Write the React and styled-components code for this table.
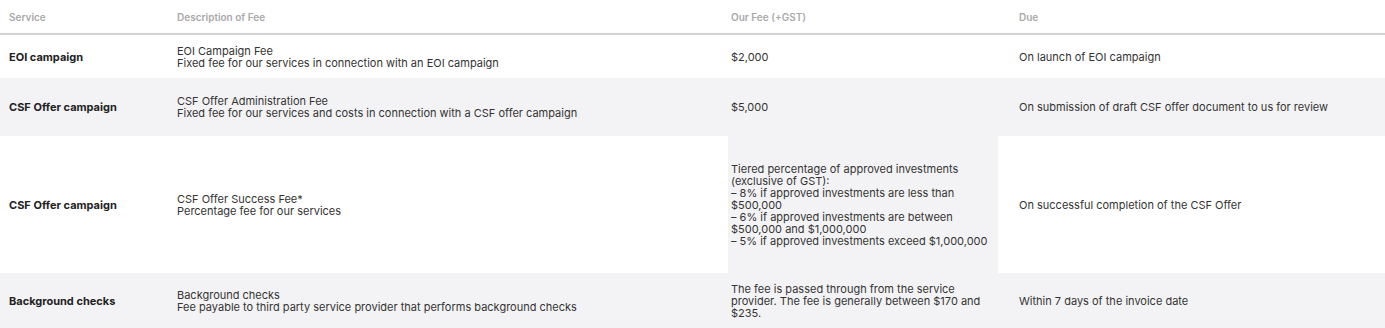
import React from "react";
import styled, { createGlobalStyle } from "styled-components";

const GlobalStyle = createGlobalStyle`
  html, body {
    margin: 0;
    padding: 0;
    background: #fff;
  }
  body {
    font-family: Inter, "Noto Sans", "Liberation Sans", sans-serif;
    color: #333;
  }
`;

const fees = [
  {
    service: "EOI campaign",
    description: ["EOI Campaign Fee", "Fixed fee for our services in connection with an EOI campaign"],
    fee: ["$2,000"],
    due: "On launch of EOI campaign",
    height: 43,
    shaded: false,
  },
  {
    service: "CSF Offer campaign",
    description: [
      "CSF Offer Administration Fee",
      "Fixed fee for our services and costs in connection with a CSF offer campaign",
    ],
    fee: ["$5,000"],
    due: "On submission of draft CSF offer document to us for review",
    height: 58,
    shaded: true,
  },
  {
    service: "CSF Offer campaign",
    description: ["CSF Offer Success Fee*", "Percentage fee for our services"],
    fee: [
      "Tiered percentage of approved investments (exclusive of GST):",
      "– 8% if approved investments are less than $500,000",
      "– 6% if approved investments are between $500,000 and $1,000,000",
      "– 5% if approved investments exceed $1,000,000",
    ],
    due: "On successful completion of the CSF Offer",
    height: 137,
    shaded: false,
    feeShaded: true,
  },
  {
    service: "Background checks",
    description: [
      "Background checks",
      "Fee payable to third party service provider that performs background checks",
    ],
    fee: ["The fee is passed through from the service provider. The fee is generally between $170 and $235."],
    due: "Within 7 days of the invoice date",
    height: 55,
    shaded: true,
  },
];

const Table = styled.div`
  display: grid;
  grid-template-columns: 168px 560px 270px 1fr;
  width: 100%;
`;

const HeadCell = styled.div`
  height: 33px;
  display: flex;
  align-items: center;
  padding-left: ${(p) => p.$indent}px;
  border-bottom: 2px solid #d2d2d2;
  font-size: 10px;
  font-weight: 600;
  color: #a9a9a9;
`;

const Cell = styled.div`
  min-height: ${(p) => p.$height}px;
  display: flex;
  flex-direction: column;
  justify-content: center;
  padding: 0 10px 0 ${(p) => p.$indent}px;
  background: ${(p) => (p.$shaded ? "#f3f3f5" : "#fff")};
  font-size: 11px;
  line-height: 12px;
  color: #333;
`;

const ServiceName = styled.span`
  font-weight: 700;
  color: #222;
`;

const Line = styled.span`
  display: block;
`;

const indents = [9, 9, 3, 21];
const headers = ["Service", "Description of Fee", "Our Fee (+GST)", "Due"];

export default function App() {
  return (
    <>
      <GlobalStyle />
      <Table>
        {headers.map((h, i) => (
          <HeadCell key={h} $indent={indents[i]}>
            {h}
          </HeadCell>
        ))}
        {fees.map((row, r) => (
          <React.Fragment key={r}>
            <Cell $indent={indents[0]} $height={row.height} $shaded={row.shaded}>
              <ServiceName>{row.service}</ServiceName>
            </Cell>
            <Cell $indent={indents[1]} $height={row.height} $shaded={row.shaded}>
              {row.description.map((d) => (
                <Line key={d}>{d}</Line>
              ))}
            </Cell>
            <Cell $indent={indents[2]} $height={row.height} $shaded={row.shaded || row.feeShaded}>
              {row.fee.map((f) => (
                <Line key={f}>{f}</Line>
              ))}
            </Cell>
            <Cell $indent={indents[3]} $height={row.height} $shaded={row.shaded}>
              {row.due}
            </Cell>
          </React.Fragment>
        ))}
      </Table>
    </>
  );
}
